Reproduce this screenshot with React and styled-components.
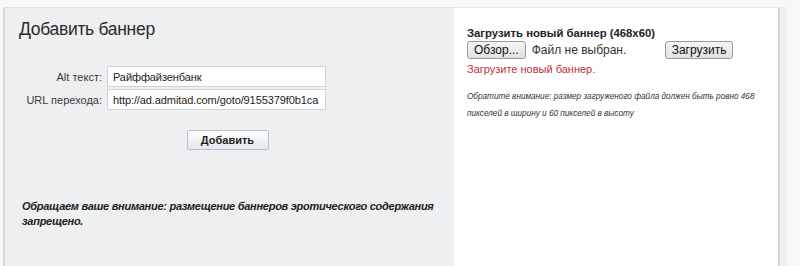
import React from 'react';
import styled, { createGlobalStyle } from 'styled-components';

const GlobalStyle = createGlobalStyle`
  html, body {
    margin: 0;
    padding: 0;
    background: #fff;
    font-family: "Liberation Sans", Arial, sans-serif;
  }
`

const Page = styled.div`
  display: flex;
  height: 266px;
  padding-top: 7px;
  padding-left: 3px;
  box-sizing: border-box;
  background: #f8f8f8;
  overflow: hidden;
`
const LeftPanel = styled.div`
  width: 451px;
  background: #eeeff1;
  border-left: 2px solid #d9dadc;
  border-top: 1px solid #e2e3e5;
  padding: 11px 0 0 14px;
  box-sizing: border-box;
  display: flex;
  flex-direction: column;
`
const RightPanel = styled.div`
  width: 326px;
  background: #fff;
  border-top: 1px solid #e8e8e8;
  border-right: 2px solid #d6d6d6;
  padding: 19px 0 0 13px;
  box-sizing: border-box;
  display: flex;
  flex-direction: column;
`
const SideStrip = styled.div`
  width: 7px;
  background: #efefef;
`
const Title = styled.h1`
  margin: 0;
  font-size: 17.5px;
  font-weight: normal;
  color: #2b2b2b;
  letter-spacing: -0.3px;
`
const Form = styled.div`
  display: grid;
  grid-template-columns: 83px 219px;
  column-gap: 5px;
  row-gap: 2px;
  margin-top: 26px;
`
const Label = styled.label`
  font-size: 11px;
  color: #3a3a3a;
  text-align: right;
  align-self: center;
`
const Input = styled.input`
  height: 21px;
  box-sizing: border-box;
  border: 1px solid #d2d3d6;
  background: #fff;
  padding: 0 4px 0 5px;
  font-family: "Liberation Sans", Arial, sans-serif;
  font-size: 11px;
  letter-spacing: -0.1px;
  color: #222;
  outline: none;
`
const SubmitRow = styled.div`
  display: flex;
  justify-content: center;
  margin-top: 20px;
  padding-right: 18px;
`
const SubmitButton = styled.button`
  width: 82px;
  height: 20px;
  border: 1px solid #b9c0cc;
  border-radius: 2px;
  background: linear-gradient(#ffffff, #e4e7ec);
  font-family: "Liberation Sans", Arial, sans-serif;
  font-size: 11px;
  font-weight: bold;
  color: #1e1e1e;
  padding: 0;
`
const Notice = styled.p`
  margin: 49px 0 0 3px;
  font-size: 11px;
  font-weight: bold;
  font-style: italic;
  letter-spacing: -0.27px;
  line-height: 15px;
  color: #222;
  padding-right: 14px;
`
const UploadTitle = styled.div`
  font-size: 11.3px;
  font-weight: bold;
  color: #222;
`
const FileRow = styled.div`
  display: flex;
  align-items: center;
  margin-top: 2px;
`
const FileButton = styled.button`
  height: 18px;
  padding: 0 6px;
  border: 1px solid #9a9a9a;
  border-radius: 3px;
  background: linear-gradient(#f4f4f4, #e2e2e2);
  font-family: "Liberation Sans", Arial, sans-serif;
  font-size: 12px;
  color: #111;
`
const FileName = styled.span`
  font-size: 12px;
  color: #333;
  margin-left: 6px;
  width: 133px;
`
const ErrorText = styled.div`
  font-size: 11px;
  color: #c0303a;
  margin-top: 4px;
`
const Hint = styled.p`
  margin: 13px 0 0 0;
  font-size: 8.2px;
  font-style: italic;
  line-height: 17px;
  color: #333;
  width: 305px;
`

const App = () => {
  return (
    <>
      <GlobalStyle />
      <Page>
        <LeftPanel>
          <Title>Добавить баннер</Title>
          <Form>
            <Label>Alt текст:</Label>
            <Input defaultValue="Райффайзенбанк" />
            <Label>URL перехода:</Label>
            <Input defaultValue="http://ad.admitad.com/goto/9155379f0b1ca" />
          </Form>
          <SubmitRow>
            <SubmitButton>Добавить</SubmitButton>
          </SubmitRow>
          <Notice>
            Обращаем ваше внимание: размещение баннеров эротического содержания запрещено.
          </Notice>
        </LeftPanel>
        <RightPanel>
          <UploadTitle>Загрузить новый баннер (468x60)</UploadTitle>
          <FileRow>
            <FileButton>Обзор...</FileButton>
            <FileName>Файл не выбран.</FileName>
            <FileButton>Загрузить</FileButton>
          </FileRow>
          <ErrorText>Загрузите новый баннер.</ErrorText>
          <Hint>
            Обратите внимание: размер загруженого файла должен быть ровно 468 пикселей в ширину и 60 пикселей в высоту
          </Hint>
        </RightPanel>
        <SideStrip />
      </Page>
    </>
  );
};

export default App;
